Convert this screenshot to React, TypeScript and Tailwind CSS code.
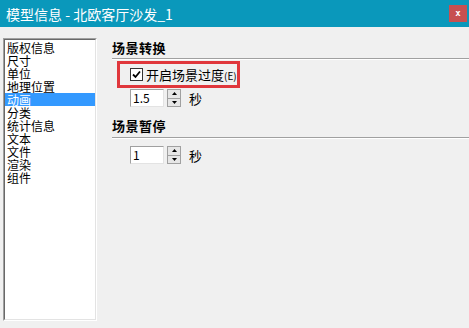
import React from "react";

const items = ["版权信息", "尺寸", "单位", "地理位置", "动画", "分类", "统计信息", "文本", "文件", "渲染", "组件"];

function Spin({ value }: { value: string }) {
  return (
    <div className="flex items-center">
      <div className="w-[34px] h-[18px] bg-white border-t border-l border-[#a0a0a0] border-r border-b border-r-[#e3e3e3] border-b-[#e3e3e3] flex items-center pl-[2px] text-[12px] leading-none text-black">
        {value}
      </div>
      <div className="ml-[3px] flex flex-col w-[14px] h-[18px]">
        <div className="flex-1 bg-[#e6e6e6] border border-[#a0a0a0] flex items-center justify-center">
          <svg width="5" height="3" viewBox="0 0 5 3"><path d="M2.5 0 L5 3 L0 3 Z" fill="#000" /></svg>
        </div>
        <div className="flex-1 bg-[#e6e6e6] border border-t-0 border-[#a0a0a0] flex items-center justify-center">
          <svg width="5" height="3" viewBox="0 0 5 3"><path d="M0 0 L5 0 L2.5 3 Z" fill="#000" /></svg>
        </div>
      </div>
      <span className="ml-[8px] text-[13px] leading-none text-black">秒</span>
    </div>
  );
}

export default function App() {
  return (
    <div className="w-[469px] h-[328px] bg-[#f0f0f0] flex flex-col overflow-hidden" style={{ fontFamily: '"Noto Sans CJK SC", "Noto Sans", sans-serif' }}>
      <div className="h-[27px] bg-[#0a98bb] flex items-center justify-between pl-[6px] pr-[2px]">
        <span className="text-white text-[14px] leading-none">模型信息 - 北欧客厅沙发_1</span>
        <div className="w-[18px] h-[17px] bg-[#c75050] flex items-center justify-center mb-[1px]">
          <span className="text-white text-[9px] font-bold leading-none" style={{ fontFamily: '"DejaVu Sans Mono", monospace' }}>x</span>
        </div>
      </div>
      <div className="flex flex-1 pl-[3px] pt-[11px]">
        <div className="w-[94px] h-[283px] border-t border-l border-[#a0a0a0] border-r border-b border-r-white border-b-white">
          <div className="w-full h-full bg-white border-t border-l border-[#696969] border-r border-b border-r-[#e3e3e3] border-b-[#e3e3e3] pt-[1px]">
            {items.map((t) => (
              <div key={t} className={`h-[13px] text-[12px] leading-[13px] pl-[2px] whitespace-nowrap ${t === "动画" ? "bg-[#3399ff] text-white" : "text-black"}`}>{t}</div>
            ))}
          </div>
        </div>
        <div className="flex-1 flex flex-col pl-[15px] pt-[2px]">
          <div className="text-[13px] font-bold leading-[16px] text-black tracking-[0.5px]">场景转换</div>
          <div className="mt-[2px] h-[2px] border-t border-[#a0a0a0] border-b border-b-white" />
          <div className="ml-[5px] mt-[1px] w-[123px] h-[27px] border-[3px] border-[#e0373c] flex items-center pl-[10px]">
            <div className="shrink-0 w-[13px] h-[13px] bg-white border border-[#333] flex items-center justify-center">
              <svg width="9" height="9" viewBox="0 0 9 9"><path d="M1 4.5 L3.5 7 L8 1.5" stroke="#000" strokeWidth="1.8" fill="none" /></svg>
            </div>
            <span className="ml-[3px] text-[13px] leading-none text-black whitespace-nowrap">开启场景过度<span className="text-[10px]">(E)</span></span>
          </div>
          <div className="ml-[18px] mt-[1px]"><Spin value="1.5" /></div>
          <div className="mt-[11px] text-[13px] font-bold leading-[16px] text-black tracking-[0.5px]">场景暂停</div>
          <div className="mt-[3px] h-[2px] border-t border-[#a0a0a0] border-b border-b-white" />
          <div className="ml-[18px] mt-[7px]"><Spin value="1" /></div>
        </div>
      </div>
    </div>
  );
}
